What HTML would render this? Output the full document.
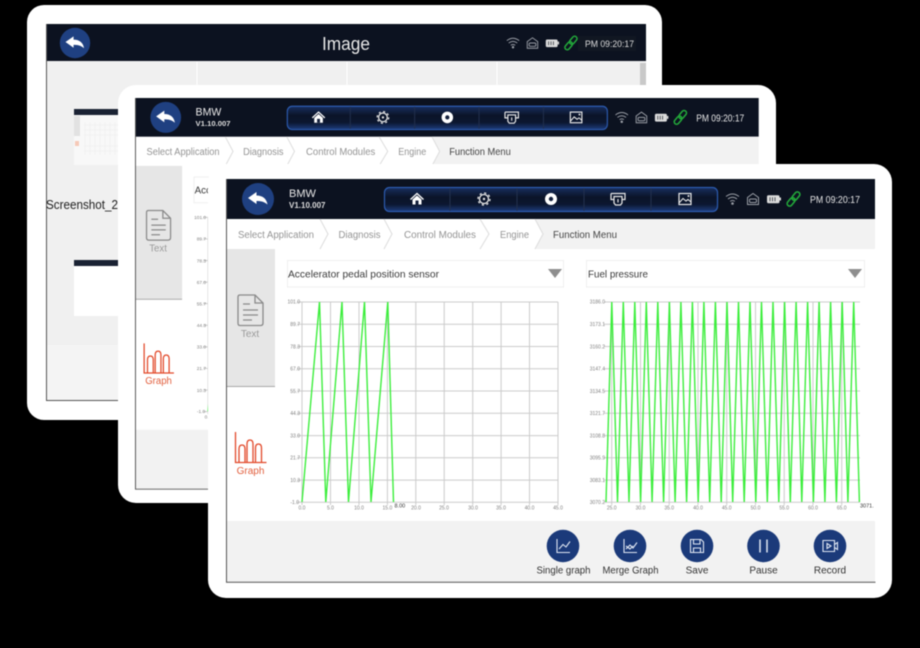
<!DOCTYPE html>
<html>
<head>
<meta charset="utf-8">
<style>
html,body{margin:0;padding:0;background:#000;width:920px;height:648px;overflow:hidden}
svg{display:block;filter:blur(.45px)}
text{font-family:"Liberation Sans","Noto Sans CJK SC",sans-serif}
</style>
</head>
<body>
<svg width="920" height="648" viewBox="0 0 920 648" xmlns="http://www.w3.org/2000/svg">
<defs>
<linearGradient id="nav" x1="0" y1="0" x2="0" y2="1"><stop offset="0" stop-color="#182f60"/><stop offset=".4" stop-color="#0b1428"/><stop offset=".7" stop-color="#0c1730"/><stop offset="1" stop-color="#1d3c7c"/></linearGradient>
<g id="back"><circle r="16" fill="#1f4081"/><path d="M-10,-1 L-1.500,-7 V-3.500 C4.500,-3.500 8.500,-.5 9.500,5.500 C6,2.500 3,2 -1.500,2 V5 Z" fill="#fff"/></g>
<g id="status" fill="none" stroke="#9a9ea6" stroke-width="1">
<path d="M-6.500,-2.500 Q0,-7.500 6.500,-2.500 M-4.500,0 Q0,-3.500 4.500,0 M-2.300,2.300 Q0,.8 2.300,2.300"/><circle cx="0" cy="4.500" r=".8" fill="#9a9ea6"/>
<path d="M15,5.500 V-1.500 L20.500,-5.500 L26,-1.500 V5.500 Z"/><rect x="17" y="0" width="7" height="3.500" rx="1.200"/>
<rect x="35" y="-3.200" width="11.500" height="7" rx="1" fill="#dcdcdc" stroke="#dcdcdc"/><path d="M37.500,-1.700V2.300M40,-1.700V2.300M42.500,-1.700V2.300" stroke="#30343c" stroke-width=".8"/><rect x="47" y="-1.500" width="1.500" height="3" fill="#d8d8d8" stroke="none"/>
<g transform="translate(61,0) rotate(-50)" stroke="#23a93a" stroke-width="1.600"><rect x="-8.500" y="-2.500" width="9.500" height="5" rx="2.500"/><rect x="-1" y="-2.500" width="9.500" height="5" rx="2.500"/></g>
</g>
<g id="gridA" stroke="#cbcbcb" stroke-width="1" fill="none">
<path d="M297,302H558M297,324.300H558M297,346.500H558M297,368.800H558M297,391H558M297,413.300H558M297,435.600H558M297,457.800H558M297,480.100H558M297,502.300H558"/>
<path d="M302,302V505M330.500,302V505M359,302V505M387.400,302V505M415.800,302V505M444.200,302V505M472.700,302V505M501.100,302V505M529.500,302V505M558,302V505"/>
</g>
<g id="screen3">
<rect x="226" y="179" width="649" height="403" fill="#fff"/>
<rect x="226" y="179" width="649" height="40" fill="#0c1220"/>
<use href="#back" x="258" y="199"/>
<text x="289" y="197" font-size="11" fill="#e8e8e8">BMW</text>
<text x="289" y="208" font-size="8" font-weight="bold" fill="#dcdcdc">V1.10.007</text>
<rect x="384.500" y="187.500" width="333" height="24" rx="5" fill="url(#nav)" stroke="#2c5bb0" stroke-width="1.200"/>
<path d="M450,188V211M517,188V211M584,188V211M651,188V211" stroke="#22304e" stroke-width="1"/>
<path d="M410.500,199.500 L417,193.500 L423.500,199.500" fill="none" stroke="#fff" stroke-width="1.300"/><path d="M412.500,199.500 L417,195.500 L421.500,199.500 V204.500 H412.500 Z" fill="#fff"/><rect x="415.500" y="200.500" width="3" height="4" fill="#14203c"/>
<circle cx="484" cy="199" r="4.500" fill="none" stroke="#e8e8e8" stroke-width="1.300"/><circle cx="484" cy="199" r="6" fill="none" stroke="#e8e8e8" stroke-width="1.300" stroke-dasharray="2.200 2.500"/><circle cx="484" cy="199" r="1.200" fill="#e8e8e8"/>
<circle cx="551" cy="199" r="6" fill="#fff"/><circle cx="551" cy="199" r="2.200" fill="#14203c"/>
<path d="M611,193.500H625V199.500H622M614,199.500H611V193.500M614,196.500H622V203L620.500,205H615.500L614,203Z M618,199V202.500" fill="none" stroke="#e8e8e8" stroke-width="1.200"/>
<rect x="679" y="193.500" width="12" height="11" fill="none" stroke="#e8e8e8" stroke-width="1.200"/><path d="M679,203 L683,198.500 L686,201 L688,199.500 L691,202" fill="none" stroke="#e8e8e8" stroke-width="1.100"/><circle cx="688.500" cy="196" r="1" fill="#e8e8e8"/>
<use href="#status" x="732.500" y="199"/>
<text x="810" y="203" font-size="10" fill="#e4e4e4" textLength="50" lengthAdjust="spacingAndGlyphs">PM 09:20:17</text>
<rect x="226" y="219" width="649" height="30" fill="#fff"/>
<path d="M535,219 L543,234 L535,249 H875 V219 Z" fill="#f2f2f2"/>
<path d="M320,219L328,234L320,249M384,219L392,234L384,249M480,219L489,234L480,249M535,219L543,234L535,249" fill="none" stroke="#dcdcdc" stroke-width="1"/>
<g font-size="10" fill="#949494">
<text x="238" y="238" textLength="76" lengthAdjust="spacingAndGlyphs">Select Application</text>
<text x="338.500" y="238" textLength="42" lengthAdjust="spacingAndGlyphs">Diagnosis</text>
<text x="404" y="238" textLength="72" lengthAdjust="spacingAndGlyphs">Control Modules</text>
<text x="500" y="238" textLength="29" lengthAdjust="spacingAndGlyphs">Engine</text>
<text x="553" y="238" fill="#444" textLength="64" lengthAdjust="spacingAndGlyphs">Function Menu</text>
</g>
<rect x="226" y="249" width="49" height="137" fill="#e6e6e6"/>
<path d="M226,386.500H275" stroke="#a8a8a8" stroke-width="1"/>
<path d="M240,295 H255 L263,303 V323 Q263,325.500 260.500,325.500 H240 Q238,325.500 238,323 V297 Q238,295 240,295 Z M255,295 V303 H263 M243,304H250M243,310H258M243,315H258M243,320H252" fill="none" stroke="#8a8a8a" stroke-width="1.300"/>
<text x="250" y="337" font-size="10" fill="#9a9a9a" text-anchor="middle">Text</text>
<path d="M235.500,432V462.500H266.500M239,462V449Q239,445 242,445Q245,445 245,449V462M247,462V444Q247,440 250,440Q253,440 253,444V462M255.500,462V448Q255.500,444 258.500,444Q261.500,444 261.500,448V462" fill="none" stroke="#e2492a" stroke-width="1.300"/>
<text x="250.500" y="474" font-size="10" fill="#e2603f" text-anchor="middle">Graph</text>
<rect x="287.500" y="260.500" width="276" height="26.500" fill="#fff" stroke="#efefef"/>
<text x="288" y="277.500" font-size="10.500" fill="#3c3c3c" textLength="151" lengthAdjust="spacingAndGlyphs">Accelerator pedal position sensor</text>
<path d="M548,269H562L555,278Z" fill="#8e8e8e"/>
<rect x="586.500" y="260.500" width="278" height="26.500" fill="#fff" stroke="#efefef"/>
<text x="588" y="277.500" font-size="10.500" fill="#3c3c3c" textLength="60" lengthAdjust="spacingAndGlyphs">Fuel pressure</text>
<path d="M848,269H862L855,278Z" fill="#8e8e8e"/>
<use href="#gridA"/>
<g font-size="5" fill="#808080" text-anchor="end">
<text x="300" y="303.500">101.0</text><text x="300" y="326">89.7</text><text x="300" y="348.500">78.3</text><text x="300" y="370.500">67.0</text><text x="300" y="393">55.7</text><text x="300" y="415">44.3</text><text x="300" y="437.500">33.0</text><text x="300" y="459.500">21.7</text><text x="300" y="482">10.3</text><text x="299" y="504">-1.0</text>
</g>
<g font-size="5" fill="#808080" text-anchor="middle">
<text x="302" y="509.500">0.0</text><text x="330.500" y="509.500">5.0</text><text x="359" y="509.500">10.0</text><text x="387.400" y="509.500">15.0</text><text x="416" y="509.500">20.0</text><text x="444" y="509.500">25.0</text><text x="473" y="509.500">30.0</text><text x="501" y="509.500">35.0</text><text x="529.500" y="509.500">40.0</text><text x="558" y="509.500">45.0</text>
</g>
<text x="394.500" y="507.500" font-size="5.500" fill="#333">8.00</text>
<polyline points="302,502 319.500,302 325.800,502 342,302 348.500,502 364.500,302 371,502 387.800,302 393.500,502" fill="none" stroke="#3cee3c" stroke-width="1.400"/>
<g stroke="#cbcbcb" stroke-width="1" fill="none">
<path d="M604,302H860M604,324.300H860M604,346.500H860M604,368.800H860M604,391H860M604,413.300H860M604,435.600H860M604,457.800H860M604,480.100H860M604,502.300H860"/>
<path d="M611.700,302V505M640.500,302V505M669.200,302V505M698,302V505M726.700,302V505M755.500,302V505M784.200,302V505M813,302V505M841.700,302V505"/>
</g>
<g font-size="5" fill="#808080" text-anchor="end">
<text x="605" y="303.500">3186.0</text><text x="605" y="326">3173.1</text><text x="605" y="348.500">3160.2</text><text x="605" y="370.500">3147.4</text><text x="605" y="393">3134.5</text><text x="605" y="415">3121.7</text><text x="605" y="437.500">3108.8</text><text x="605" y="459.500">3095.9</text><text x="605" y="482">3083.1</text><text x="605" y="504">3070.2</text>
</g>
<g font-size="5" fill="#808080" text-anchor="middle">
<text x="611.700" y="509.500">25.0</text><text x="640.500" y="509.500">30.0</text><text x="669.200" y="509.500">35.0</text><text x="698" y="509.500">40.0</text><text x="726.700" y="509.500">45.0</text><text x="755.500" y="509.500">50.0</text><text x="784.200" y="509.500">55.0</text><text x="813" y="509.500">60.0</text><text x="841.700" y="509.500">65.0</text>
</g>
<text x="860" y="507.500" font-size="5.500" fill="#333">3071.</text>
<polyline points="606,502 611.800,302 617.500,502 623.300,302 629,502 634.800,302 640.600,502 646.300,302 652.100,502 657.800,302 663.600,502 669.400,302 675.100,502 680.900,302 686.600,502 692.400,302 698.200,502 703.900,302 709.700,502 715.400,302 721.200,502 727,302 732.700,502 738.500,302 744.200,502 750,302 755.800,502 761.500,302 767.300,502 773,302 778.800,502 784.600,302 790.300,502 796.100,302 801.800,502 807.600,302 813.400,502 819.100,302 824.900,502 830.600,302 836.400,502 842.200,302 847.900,502 853.700,302 859.400,502" fill="none" stroke="#3cee3c" stroke-width="1.400"/>
<rect x="226" y="521" width="649" height="61" fill="#f2f2f2"/>
<g fill="#1b3a7a"><circle cx="563" cy="546" r="16.300"/><circle cx="630" cy="546" r="16.300"/><circle cx="697" cy="546" r="16.300"/><circle cx="763.500" cy="546" r="16.300"/><circle cx="830" cy="546" r="16.300"/></g>
<g fill="none" stroke="#dfe6f2" stroke-width="1.100">
<path d="M557,539V552.500H570M559,549L563,544.500L566,547L570,541.500"/>
<path d="M624,539V552.500H637M626,549L630,545L633,548L637,542.500M626,546L630,549L633,546"/>
<path d="M690.500,539.500H701L703.500,542V552.500H690.500Z M693.500,539.500V544H700V539.500M693.500,552.500V548H700.500V552.500"/>
<path d="M760,539.500V552.500M767,539.500V552.500" stroke-width="1.500"/>
<path d="M823,540.500H834.500V551.500H823Z M834.500,544.500L837.500,542.500V549.500L834.500,547.500M827,543.500L831,546L827,548.500Z"/>
</g>
<g font-size="10" fill="#333" text-anchor="middle">
<text x="563.500" y="573.500" textLength="54" lengthAdjust="spacingAndGlyphs">Single graph</text>
<text x="630.500" y="573.500" textLength="56" lengthAdjust="spacingAndGlyphs">Merge Graph</text>
<text x="697" y="573.500">Save</text>
<text x="763.500" y="573.500">Pause</text>
<text x="830" y="573.500">Record</text>
</g>
<path d="M226.500,179V582M226,582.300H875.500" stroke="#555" stroke-width="1" fill="none"/>
</g>
</defs>

<!-- card 1 -->
<rect x="27" y="5" width="635" height="415" rx="17" fill="#fff"/>
<rect x="46" y="24" width="600" height="376.500" fill="#f0f0f0"/>
<rect x="46" y="345" width="600" height="55" fill="#f4f4f4"/>
<path d="M197,62V90M347,62V90M497,62V90" stroke="#fff" stroke-width="1"/>
<rect x="640" y="63" width="6" height="30" fill="#c9c9c9"/>
<rect x="46" y="24" width="600" height="37" fill="#0c1220"/>
<path d="M46.500,24V400.500H646" fill="none" stroke="#555"/>
<g transform="translate(75,43) scale(.95)"><use href="#back"/></g>
<text x="346" y="50" font-size="18" fill="#e8e8e8" text-anchor="middle" textLength="48" lengthAdjust="spacingAndGlyphs">Image</text>
<g transform="translate(513,43) scale(.95)"><use href="#status"/></g>
<rect x="578" y="36" width="58" height="15" fill="#111722"/>
<text x="585" y="47" font-size="9.500" fill="#dcdcdc" textLength="49" lengthAdjust="spacingAndGlyphs">PM 09:20:17</text>
<rect x="74" y="109" width="50" height="56" fill="#f8f8f8"/>
<rect x="74" y="109" width="50" height="6" fill="#1a2233"/>
<rect x="74" y="116" width="6" height="20" fill="#e2e2e2"/>
<path d="M85,122V155M90,122V155M95,122V155M100,122V155M105,122V155M110,122V155M115,122V155M84,125H124M84,130H124M84,135H124M84,146H124M84,151H124" stroke="#efefef" stroke-width=".7"/>
<rect x="75" y="141" width="4" height="5" fill="#f6c9b8"/>
<text x="46" y="209" font-size="12.500" fill="#222" textLength="72" lengthAdjust="spacingAndGlyphs">Screenshot_2</text>
<rect x="74" y="260" width="50" height="56" fill="#fff"/>
<rect x="74" y="260" width="50" height="6" fill="#1a2233"/>

<!-- card 2 -->
<rect x="118" y="85" width="658" height="418" rx="18" fill="#fff"/>
<g transform="translate(135,98) scale(.961,.97) translate(-226,-179)"><use href="#screen3"/></g>

<!-- card 3 -->
<rect x="208" y="164" width="684" height="434" rx="18" fill="#fff"/>
<use href="#screen3"/>
</svg>
</body>
</html>
